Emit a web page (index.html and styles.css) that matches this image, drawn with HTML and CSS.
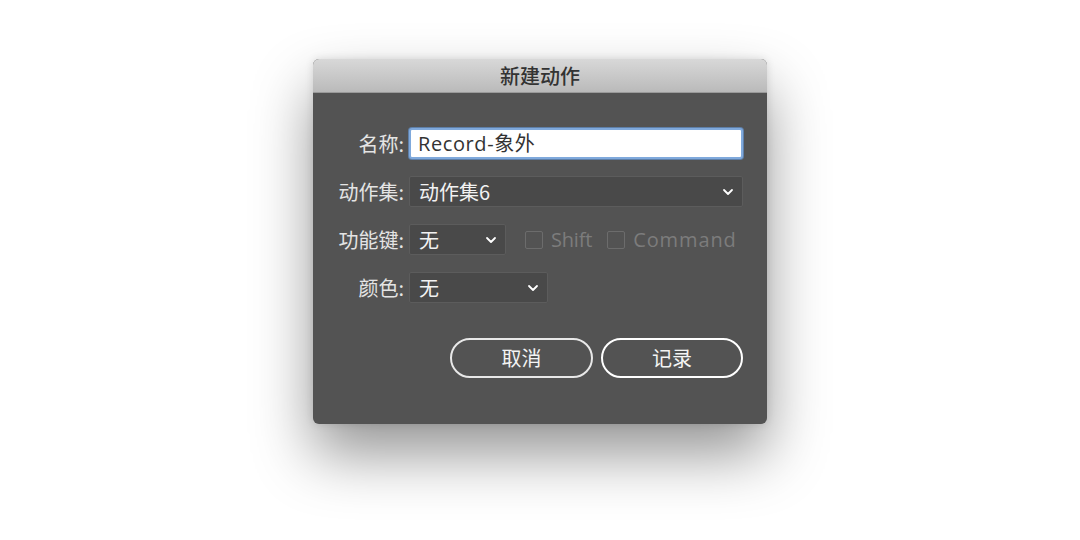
FILE: index.html
```html
<!DOCTYPE html>
<html lang="zh">
<head>
<meta charset="utf-8">
<title>新建动作</title>
<link rel="stylesheet" href="styles.css">
</head>
<body>
<div class="stage">
  <div class="dialog">
    <div class="titlebar">新建动作</div>
    <div class="content">
      <div class="form">
        <label class="lbl">名称:</label>
        <div class="field"><div class="input">Record-象外</div></div>

        <label class="lbl">动作集:</label>
        <div class="field"><div class="select wide"><span>动作集6</span><svg class="chev" viewBox="0 0 12 8"><path d="M2 2 L6 6 L10 2" /></svg></div></div>

        <label class="lbl">功能键:</label>
        <div class="field">
          <div class="select fk"><span>无</span><svg class="chev" viewBox="0 0 12 8"><path d="M2 2 L6 6 L10 2" /></svg></div>
          <div class="check first"><span class="box"></span><span class="ctext">Shift</span></div>
          <div class="check second"><span class="box"></span><span class="ctext">Command</span></div>
        </div>

        <label class="lbl">颜色:</label>
        <div class="field"><div class="select color"><span>无</span><svg class="chev" viewBox="0 0 12 8"><path d="M2 2 L6 6 L10 2" /></svg></div></div>
      </div>
      <div class="buttons">
        <div class="btn cancel">取消</div>
        <div class="btn record">记录</div>
      </div>
    </div>
  </div>
</div>
</body>
</html>
```
FILE: styles.css
```css
html, body {
  margin: 0;
  padding: 0;
  background: #ffffff;
}
body {
  width: 1080px;
  height: 540px;
  overflow: hidden;
  font-family: "Open Sans", "Noto Sans CJK SC", sans-serif;
}
.stage {
  display: flex;
  justify-content: center;
  padding-top: 59px;
}
.dialog {
  width: 454px;
  height: 365px;
  background: #535353;
  border-radius: 6px;
  box-shadow: 0 30px 60px rgba(0,0,0,0.42), 0 0 8px rgba(0,0,0,0.12);
  overflow: hidden;
  display: flex;
  flex-direction: column;
}
.titlebar {
  height: 34px;
  line-height: 34px;
  text-align: center;
  background: linear-gradient(#d8d8d8, #bababa);
  border-bottom: 1px solid #9a9a9a;
  box-sizing: border-box;
  color: #333333;
  font-size: 20px;
  font-weight: 500;
  font-family: "Noto Sans CJK SC", sans-serif;
}
.content {
  padding: 35px 24px 0 0;
  display: flex;
  flex-direction: column;
}
.form {
  display: grid;
  grid-template-columns: 91px 1fr;
  column-gap: 5px;
  row-gap: 17px;
}
.lbl {
  text-align: right;
  color: #e4e4e4;
  font-size: 20px;
  line-height: 31px;
  height: 31px;
  font-family: "Noto Sans CJK SC", sans-serif;
}
.field {
  display: flex;
  align-items: center;
  height: 31px;
}
.input {
  box-sizing: border-box;
  width: 100%;
  height: 31px;
  background: #ffffff;
  border: 2px solid #7fa9dc;
  border-radius: 3px;
  box-shadow: 0 0 0 1px #5e7fa8;
  padding-left: 7px;
  color: #333333;
  font-size: 20px;
  line-height: 27px;
  letter-spacing: 0.6px;
}
.select {
  box-sizing: border-box;
  height: 31px;
  background: #494949;
  border: 1px solid #5c5c5c;
  border-radius: 2px;
  padding: 0 8px 0 9px;
  display: flex;
  align-items: center;
  justify-content: space-between;
  color: #f2f2f2;
  font-size: 20px;
  font-family: "Noto Sans CJK SC", sans-serif;
}
.select span {
  line-height: 29px;
}
.select.wide { width: 100%; }
.select.fk { width: 97px; }
.select.color { width: 139px; }
.chev {
  width: 12px;
  height: 8px;
  fill: none;
  stroke: #ffffff;
  stroke-width: 1.8;
  stroke-linecap: round;
  stroke-linejoin: round;
}
.check {
  display: flex;
  align-items: center;
  gap: 8px;
}
.check.first { margin-left: 19px; }
.check.second { margin-left: 15px; }
.box {
  box-sizing: border-box;
  width: 18px;
  height: 18px;
  border: 1px solid #6c6c6c;
  border-radius: 2px;
}
.ctext {
  color: #7c7c7c;
  font-size: 20px;
  font-family: "Open Sans", sans-serif;
}
.first .ctext { letter-spacing: -0.2px; }
.second .ctext { letter-spacing: 0.9px; }
.buttons {
  display: flex;
  justify-content: flex-end;
  gap: 8px;
  margin-top: 35px;
}
.btn {
  box-sizing: border-box;
  height: 40px;
  border-radius: 20px;
  border: 2px solid #e8e8e8;
  color: #f4f4f4;
  font-size: 20px;
  line-height: 36px;
  text-align: center;
  font-family: "Noto Sans CJK SC", sans-serif;
}
.btn.cancel { width: 143px; }
.btn.record { width: 142px; border: 2.5px solid #ffffff; line-height: 35px; }
```
